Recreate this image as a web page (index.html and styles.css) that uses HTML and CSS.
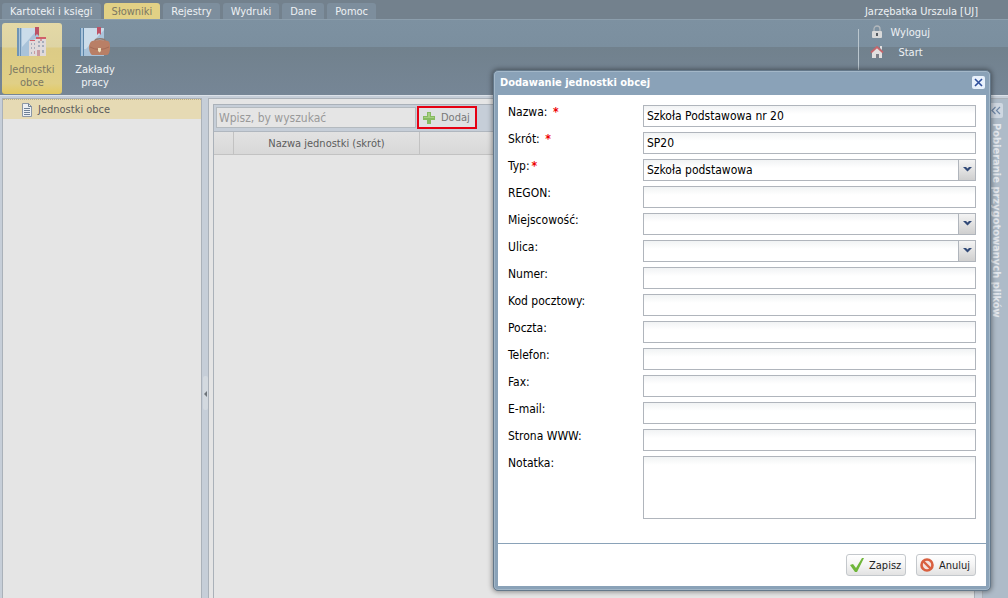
FILE: index.html
```html
<!DOCTYPE html>
<html lang="pl">
<head>
<meta charset="utf-8">
<title>Słowniki – Jednostki obce</title>
<link rel="stylesheet" href="styles.css">
</head>
<body>
<div class="app">
  <header class="topbar">
    <nav class="tabs">
      <button class="tab">Kartoteki i księgi</button>
      <button class="tab tab-active">Słowniki</button>
      <button class="tab">Rejestry</button>
      <button class="tab">Wydruki</button>
      <button class="tab">Dane</button>
      <button class="tab">Pomoc</button>
    </nav>
    <span class="user">Jarzębatka Urszula [UJ]</span>
  </header>
  <div class="ribbon">
    <div class="ribbon-items">
      <button class="ribbon-item ribbon-item-active">
        <svg width="32" height="32" viewBox="0 0 32 32">
          <rect x="1" y="1" width="22" height="28" fill="#a9c3da"/>
          <path d="M1 1h2v28H1zM4 1h1v28H4z" fill="#6f94b5"/>
          <path d="M6 1h17L6 20z" fill="#cbdcea"/>
          <path d="M19 0h4v9l-2-2-2 2z" fill="#bd5366"/>
          <path d="M13 14l7-2v-2h10v19H13z" fill="#e0dadb"/>
          <path d="M20 10h10v2H20zM14 13h5v1h-5z" fill="#d0606a"/>
          <path d="M15 16h1v2h-1zM18 16h1v2h-1zM22 14h2v2h-2zM26 14h2v2h-2zM22 18h2v2h-2zM26 18h2v2h-2zM15 20h1v2h-1zM18 20h1v2h-1zM15 25h1v2h-1zM26 23h2v3h-2z" fill="#a6aebc"/>
          <path d="M21 23h3v6h-3zM24 12h2v2h-2zM18 24h1v3h-1z" fill="#c99aa0"/>
        </svg>
        <span>Jednostki obce</span>
      </button>
      <button class="ribbon-item">
        <svg width="32" height="32" viewBox="0 0 32 32">
          <rect x="1" y="1" width="24" height="28" fill="#a9c3da"/>
          <path d="M1 1h1v28H1zM4 1h1v28H4z" fill="#5d86aa"/>
          <path d="M5 1h20v2L7 22H5z" fill="#cbdcea"/>
          <path d="M18 0h4v8l-2-2-2 2z" fill="#bd5366"/>
          <path d="M16 14c0-3 10-3 10 0" fill="none" stroke="#8f7b72" stroke-width="1.5"/>
          <path d="M13 14q8-2 16 0c2 1 2 4 2 6 0 4-1 8-3 8H13c-2-1-3-5-3-8 0-2 1-5 3-6z" fill="#b97f66"/>
          <path d="M11 20q9 5 19 0" fill="none" stroke="#a56b56"/>
          <path d="M19 21h3v3l-1.500 1.500L19 24z" fill="#eee0bd"/>
        </svg>
        <span>Zakłady pracy</span>
      </button>
    </div>
    <div class="session">
      <a class="session-link" href="#">
        <svg width="14" height="14" viewBox="0 0 14 14"><path d="M4 7V4a3 3 0 0 1 6 0v3" fill="none" stroke="#b3b8bc" stroke-width="1.300"/><rect x="2" y="6" width="10" height="7" rx="1" fill="#d8d9d9"/><path d="M6 8h2v3H6z" fill="#555c63"/></svg>
        <span>Wyloguj</span>
      </a>
      <a class="session-link session-start" href="#">
        <svg width="14" height="14" viewBox="0 0 14 14"><path d="M2 7l5-5 5 5v6H2z" fill="#e2dfdf"/><path d="M1 7.500L7 2l6 5.500" fill="none" stroke="#c4656b" stroke-width="1.800"/><path d="M10 1h2v4l-2-2z" fill="#e2dfdf"/><path d="M6 9h3v4H6z" fill="#7c7f88"/></svg>
        <span>Start</span>
      </a>
    </div>
  </div>
  <div class="workspace">
    <aside class="tree">
      <a class="tree-item" href="#">
        <svg width="12" height="14" viewBox="0 0 12 14"><path d="M1.500.5h6l3 3v10h-9z" fill="#edf0f3" stroke="#8c97a5"/><path d="M7.500.5v3h3M3 5.500h6M3 7.500h6M3 9.500h6M3 11.500h6" fill="none" stroke="#6f8196"/></svg>
        <span>Jednostki obce</span>
      </a>
    </aside>
    <button class="splitter" aria-label="Zwiń panel"><svg width="5" height="34" viewBox="0 0 5 34"><rect width="5" height="34" rx="2" fill="#d3d9df"/><path d="M4 15v6l-3-3z" fill="#6e747a"/></svg></button>
    <main class="content">
      <div class="grid-panel">
        <div class="toolbar">
          <input class="search" type="text" placeholder="Wpisz, by wyszukać" aria-label="Wyszukaj">
          <button class="add"><svg width="12" height="12" viewBox="0 0 12 12"><path d="M4 0h4v4h4v4H8v4H4V8H0V4h4z" fill="#86bb61"/><path d="M5 1h2v4h4v1H1V5h4z" fill="#a5cf83"/></svg><span>Dodaj</span></button>
        </div>
        <table class="grid">
          <thead><tr><th class="col-num"></th><th class="col-name">Nazwa jednostki (skrót)</th><th></th></tr></thead>
        </table>
      </div>
    </main>
    <aside class="files">
      <button class="expand" aria-label="Rozwiń panel"><svg width="10" height="9" viewBox="0 0 10 9"><path d="M4.500 1L1 4.500 4.500 8M9 1L5.500 4.500 9 8" fill="none" stroke="#7189a8" stroke-width="1.200"/></svg></button>
      <span class="files-title">Pobieranie przygotowanych plików</span>
    </aside>
  </div>
  <form class="dialog" role="dialog" aria-labelledby="dialog-title">
    <div class="dialog-head">
      <h1 class="dialog-title" id="dialog-title">Dodawanie jednostki obcej</h1>
      <button class="close" type="button" aria-label="Zamknij"><svg width="9" height="9" viewBox="0 0 9 9"><path d="M1 1l7 7M8 1L1 8" stroke="#2e4f9c" stroke-width="1.600"/></svg></button>
    </div>
    <div class="dialog-body">
      <div class="fields">
        <label for="nazwa">Nazwa: <b class="req">*</b></label><input class="field" id="nazwa" type="text" value="Szkoła Podstawowa nr 20">
        <label for="skrot">Skrót: <b class="req">*</b></label><input class="field" id="skrot" type="text" value="SP20">
        <label for="typ">Typ:<b class="req">*</b></label><div class="combo"><select class="field" id="typ"><option>Szkoła podstawowa</option></select></div>
        <label for="regon">REGON:</label><input class="field" id="regon" type="text">
        <label for="miejscowosc">Miejscowość:</label><div class="combo"><select class="field" id="miejscowosc"><option></option></select></div>
        <label for="ulica">Ulica:</label><div class="combo"><select class="field" id="ulica"><option></option></select></div>
        <label for="numer">Numer:</label><input class="field" id="numer" type="text">
        <label for="kod">Kod pocztowy:</label><input class="field" id="kod" type="text">
        <label for="poczta">Poczta:</label><input class="field" id="poczta" type="text">
        <label for="telefon">Telefon:</label><input class="field" id="telefon" type="text">
        <label for="fax">Fax:</label><input class="field" id="fax" type="text">
        <label for="email">E-mail:</label><input class="field" id="email" type="text">
        <label for="www">Strona WWW:</label><input class="field" id="www" type="text">
        <label for="notatka">Notatka:</label><textarea class="field note" id="notatka"></textarea>
      </div>
      <div class="actions">
        <button class="btn" type="button"><svg width="14" height="14" viewBox="0 0 14 14"><path d="M0 7l3-1 3 4L12 0h2L7 14H5z" fill="#6fb63a"/></svg><span>Zapisz</span></button>
        <button class="btn" type="button"><svg width="14" height="14" viewBox="0 0 14 14"><circle cx="7" cy="7" r="5.500" fill="#f3e3df" stroke="#d9603f" stroke-width="2.600"/><path d="M3 3l8 8" stroke="#d9603f" stroke-width="2.400"/></svg><span>Anuluj</span></button>
      </div>
    </div>
  </form>
</div>
</body>
</html>
```
FILE: styles.css
```css
*, *::before, *::after { box-sizing: border-box; }
body {
  margin: 0;
  font: 11px/13px "DejaVu Sans Condensed", "DejaVu Sans", sans-serif;
  color: #5c5c5c;
}
button, input, select, textarea { font: inherit; color: inherit; margin: 0; }
button { border: 0; padding: 0; background: none; }
a { color: inherit; text-decoration: none; }
svg { display: block; flex: none; }

.app {
  position: relative;
  display: flex;
  flex-direction: column;
  height: 100vh;
  overflow: hidden;
  background: #c6ced8;
}

.topbar {
  display: flex;
  justify-content: space-between;
  height: 19px;
  padding: 3px 30px 0 2px;
  background: #73818d;
}
.tabs { display: flex; gap: 3px; }
.tab {
  padding: 0 8px;
  border-radius: 3px 3px 0 0;
  background: #7d8e9d;
  color: #eef1f4;
  white-space: nowrap;
}
.tab-active { background: #e2d185; color: #7c7863; }
.user { padding-top: 2px; color: #eef1f4; }

.ribbon {
  display: flex;
  justify-content: space-between;
  height: 76px;
  padding: 3px 78px 0 2px;
  border-top: 1px solid #8c9eac;
  background: linear-gradient(#7d91a1 0, #7b8f9f 27px, #71818d 27px, #768696 100%);
}
.ribbon-items { display: flex; gap: 3px; }
.ribbon-item {
  display: flex;
  flex-direction: column;
  align-items: center;
  justify-content: flex-start;
  gap: 4px;
  width: 60px;
  height: 71px;
  padding-top: 4px;
  color: #eef1f4;
}
.ribbon-item span { width: 56px; }
.ribbon-item-active {
  border-radius: 3px;
  background: linear-gradient(#e4d9a6, #ded4a4 24px, #dccb86 25px, #e0cf86 85%, #e3c961);
  color: #7c7863;
}
.session {
  display: flex;
  flex-direction: column;
  gap: 6px;
  height: 66px;
  margin-top: 6px;
  padding-left: 11px;
  border-left: 1px solid #bac6ce;
  color: #eef1f4;
}
.session-link { display: flex; align-items: center; gap: 6px; height: 14px; margin-top: -4px; }
.session-link + .session-link { margin-top: 0; }
.session-start { gap: 14px; }

.workspace { flex: 1; display: flex; min-height: 0; padding: 2px 0 0 2px; border-top: 1px solid #dce2e9; }
.tree { width: 200px; border: 1px solid #aab1b9; border-bottom: 0; background: #e5e5e5; }
.tree-item {
  display: flex;
  align-items: center;
  gap: 5px;
  height: 20px;
  padding-left: 18px;
  border-top: 1px dotted #bfae80;
  background: #e6dab4;
}
.splitter { display: flex; align-items: center; justify-content: center; width: 6px; padding-top: 90px; }
.content { flex: 1; padding: 5px 0 0 4px; border: 1px solid #aab1b9; border-bottom: 0; background: #e5e5e5; }
.grid-panel { height: 100%; border: 1px solid #aab1b9; border-width: 1px 0 0 1px; }
.toolbar { display: flex; height: 27px; padding: 1px 2px; background: #c6ced8; border-bottom: 1px solid #b0b7bf; }
.search {
  width: 200px;
  height: 21px;
  margin-top: 1px;
  padding: 0 2px;
  border: 1px solid #b4babf;
  background: #e5e5e5;
  font-size: 12px;
}
.search::placeholder { color: #999; opacity: 1; }
.add {
  display: flex;
  align-items: center;
  gap: 6px;
  width: 60px;
  height: 23px;
  margin-left: 1px;
  padding-left: 4px;
  border: 2px solid #e60012;
  background: #dfe1e3;
  color: #777;
}
.grid { width: 100%; border-collapse: separate; border-spacing: 0; table-layout: fixed; }
.grid th {
  height: 23px;
  padding: 0;
  border-right: 1px solid #c2c2c2;
  border-bottom: 1px solid #c2c2c2;
  background: linear-gradient(#e2e2e2, #d8d8d8);
  font-weight: normal;
}
.grid .col-num { width: 20px; }
.grid .col-name { width: 186px; }

.files {
  display: flex;
  flex-direction: column;
  align-items: center;
  gap: 5px;
  width: 26px;
  margin-left: 7px;
  padding: 4px 0 0 1px;
  border: 1px solid #aab1b9;
  border-width: 1px 0 0 1px;
  background: #aebbc8;
}
.expand { display: flex; align-items: center; justify-content: center; width: 14px; height: 15px; border-radius: 2px; background: #cfd7e1; }
.files-title { writing-mode: vertical-rl; color: #e3e8ee; font-weight: bold; white-space: nowrap; }

.dialog {
  position: absolute;
  top: 70px;
  right: 17px;
  width: 498px;
  padding: 0 4px 4px;
  border: 1px solid #64788a;
  border-radius: 5px;
  background: #8aa2b8;
  box-shadow: inset 0 0 0 1px #a3b7c8, 0 0 5px 1px rgba(0, 0, 0, .4);
  color: #000;
}
.dialog-head { display: flex; align-items: center; justify-content: space-between; height: 24px; padding: 0 1px 2px 2px; }
.dialog-title { margin: 0; color: #fff; font-size: 11px; line-height: 13px; }
.close { display: flex; align-items: center; justify-content: center; width: 13px; height: 13px; border-radius: 2px; background: #e8f1fc; }
.dialog-body { background: #fff; }
.fields {
  display: grid;
  grid-template-columns: 135px 1fr;
  row-gap: 5px;
  padding: 10px 10px 24px;
  font-size: 12px;
}
.fields label { padding-top: 1px; }
.req { margin-left: 2px; color: #e00; }
.field {
  display: block;
  width: 100%;
  height: 22px;
  padding: 0 3px;
  border: 1px solid #b0b5bc;
  border-radius: 0;
  outline: 0;
  background: linear-gradient(#f1f3f4, #fff 8px);
}
select.field { appearance: none; }
.note { height: 63px; resize: none; }
.combo { position: relative; }
.combo::after {
  content: "";
  position: absolute;
  top: 0;
  right: 0;
  width: 18px;
  height: 22px;
  border: 1px solid #b0b5bc;
  background:
    url('data:image/svg+xml,<svg xmlns="http://www.w3.org/2000/svg" width="9" height="6"><path d="M0 1h3l1.500 1.500L6 1h3L4.500 5.500z" fill="%23324a78"/></svg>') 4px 6px no-repeat,
    linear-gradient(#f4f4f4, #cfcfcf);
  pointer-events: none;
}
.actions { display: flex; justify-content: flex-end; gap: 10px; padding: 10px 10px; border-top: 1px solid #8aa2b8; }
.btn {
  display: flex;
  align-items: center;
  gap: 5px;
  width: 60px;
  height: 22px;
  padding-left: 3px;
  border: 1px solid #c4c8cc;
  border-radius: 3px;
  background: linear-gradient(#fff, #f4f4f4 50%, #e2e2e2);
  color: #222;
}
```
